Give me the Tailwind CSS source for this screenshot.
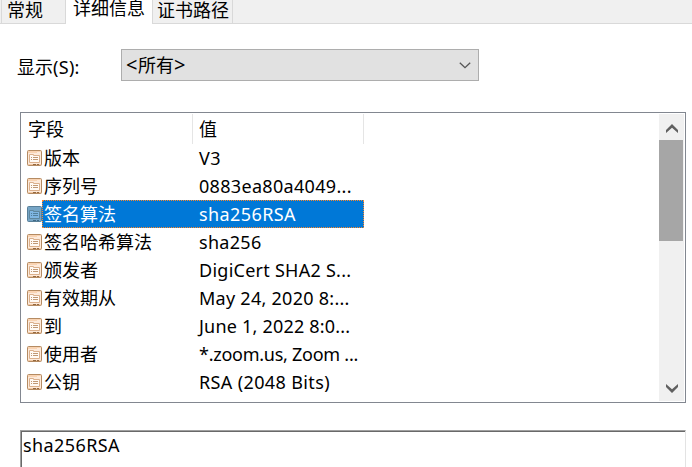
<!DOCTYPE html>
<html lang="zh-CN">
<head>
<meta charset="utf-8">
<title>证书</title>
<script src="https://cdn.jsdelivr.net/npm/@tailwindcss/browser@4"></script>
</head>
<body class="w-[692px] h-[467px] overflow-hidden bg-white text-black text-[18px] leading-[28px] whitespace-nowrap font-['Noto_Sans','Noto_Sans_CJK_SC',sans-serif]">
<svg class="hidden">
  <symbol id="field" viewBox="0 0 15 16">
    <rect x=".5" y=".5" width="14" height="15" rx="1" fill="#fdeadb" stroke="#b58b62"/>
    <path d="M1 1.5h13M1 2.5h9" stroke="#f9d3b2"/>
    <path d="M2.5 12.5v-8h4v1h6v7z" fill="#fffaf5" stroke="#dbb08c"/>
    <path d="M4 7.5h1M6 7.5h5M4 9.5h1M6 9.5h5" stroke="#c09874"/>
    <path d="M1 14.5h13" stroke="#f2c9a4"/>
    <path d="M6 14.5h3M10 14.5h2" stroke="#94683f"/>
  </symbol>
  <symbol id="field-sel" viewBox="0 0 15 16">
    <rect x=".5" y=".5" width="14" height="15" rx="1" fill="#76a5c6" stroke="#587f98"/>
    <path d="M2.5 12.5v-8h4v1h6v7z" fill="#7fb6e4" stroke="#5f869e"/>
    <path d="M4 7.5h1M6 7.5h5M4 9.5h1M6 9.5h5" stroke="#527f9c"/>
    <path d="M6 14.5h3M10 14.5h2" stroke="#416985"/>
  </symbol>
</svg>
<nav class="flex h-[24px]">
  <div class="w-px h-[24px] bg-[#f0f0f0] border-b border-[#d9d9d9]"></div>
  <div class="w-[65px] h-[24px] bg-[#f0f0f0] border-l border-b border-r border-[#d9d9d9] pl-[5px]"><div class="-mt-[4px]">常规</div></div>
  <div class="w-[86px] h-[24px] bg-white pl-[7px]"><div class="-mt-[6px]">详细信息</div></div>
  <div class="w-[81px] h-[24px] bg-[#f0f0f0] border-x border-b border-[#d9d9d9] pl-[4px]"><div class="-mt-[4px]">证书路径</div></div>
  <div class="flex-1 h-[24px] bg-[#f0f0f0] border-b border-[#d9d9d9]"></div>
</nav>
<div class="mt-[25px] flex h-[32px] pl-[17px]">
  <div class="w-[104px] pt-[4px]"><span>显示</span><span class="tracking-[0.3px]">(S):</span></div>
  <div class="flex w-[358px] h-[32px] items-center justify-between border border-[#adadad] bg-[#e1e1e1] pl-[4px] pr-[7px]">
    <span><span class="inline-block w-[12px] text-[20px]">&lt;</span>所有<span class="text-[20px]">&gt;</span></span>
    <svg class="w-[12px] h-[7px]" viewBox="0 0 12 7" fill="none" stroke="#555" stroke-width="1.3"><path d="M.8.8 6 5.7 11.2.8"/></svg>
  </div>
</div>
<main class="mt-[31px] ml-[20px] flex w-[666px] h-[291px] justify-between border border-[#828790] p-px">
  <div class="w-[342px]">
    <div class="flex h-[30px] text-[18px] leading-[30px]">
      <div class="w-[171px] border-r border-[#e5e5e5] pl-[6px]">字段</div>
      <div class="w-[171px] border-r border-[#e5e5e5] pl-[6px]">值</div>
    </div>
    <div id="rows"></div>
  </div>
  <div class="flex w-[25px] flex-col bg-[#f0f0f0]">
    <div class="flex h-[26px] items-center justify-center pt-[3px]"><svg class="w-[12px] h-[9px]" viewBox="0 0 12 9" fill="#606060"><path d="M0 6 6 0l6 6v3L6 3.8 0 9z"/></svg></div>
    <div class="w-[24px] h-[101px] bg-[#a6a6a6]"></div>
    <div class="flex-1"></div>
    <div class="flex h-[26px] items-center justify-center"><svg class="w-[12px] h-[9px]" viewBox="0 0 12 9" fill="#606060"><path d="M0 3 6 9l6-6V0L6 5.2 0 0z"/></svg></div>
  </div>
</main>
<div class="mt-[27px] ml-[20px] h-[60px] w-[666px] border-t border-l border-r border-t-[#a0a0a0] border-l-[#a0a0a0] border-r-[#e3e3e3]">
  <div class="h-full border-t border-l border-[#696969] pl-px leading-[26px] tracking-[0.4px]">sha256RSA</div>
</div>
<script>
const rows = [
  ['版本','V3','tracking-[0.5px]'],
  ['序列号','0883ea80a4049...','tracking-[0.32px]'],
  ['签名算法','sha256RSA','tracking-[0.4px]'],
  ['签名哈希算法','sha256','tracking-[0.3px]'],
  ['颁发者','DigiCert SHA2 S...','tracking-[0.26px]'],
  ['有效期从','May 24, 2020 8:...','tracking-[0.27px]'],
  ['到','June 1, 2022 8:0...','tracking-[0.2px]'],
  ['使用者','*.zoom.us, Zoom ...','tracking-[-0.26px]'],
  ['公钥','RSA (2048 Bits)','tracking-[0.37px]']
];
document.getElementById('rows').innerHTML = rows.map(([k, v, t], i) => {
  const s = i === 2;
  return `<div class="flex h-[28px] items-center pl-[5px]">
    <svg class="w-[15px] h-[16px] shrink-0"><use href="#${s ? 'field-sel' : 'field'}"/></svg>
    <div class="flex h-[28px] w-[322px] shrink-0 ${s ? 'bg-[#0078d7] text-white outline-1 -outline-offset-1 outline-dotted outline-[#ff8728]' : ''}">
      <div class="w-[157px] shrink-0 pl-[2px]">${k}</div><div class="${t}">${v}</div>
    </div></div>`;
}).join('');
</script>
</body>
</html>
